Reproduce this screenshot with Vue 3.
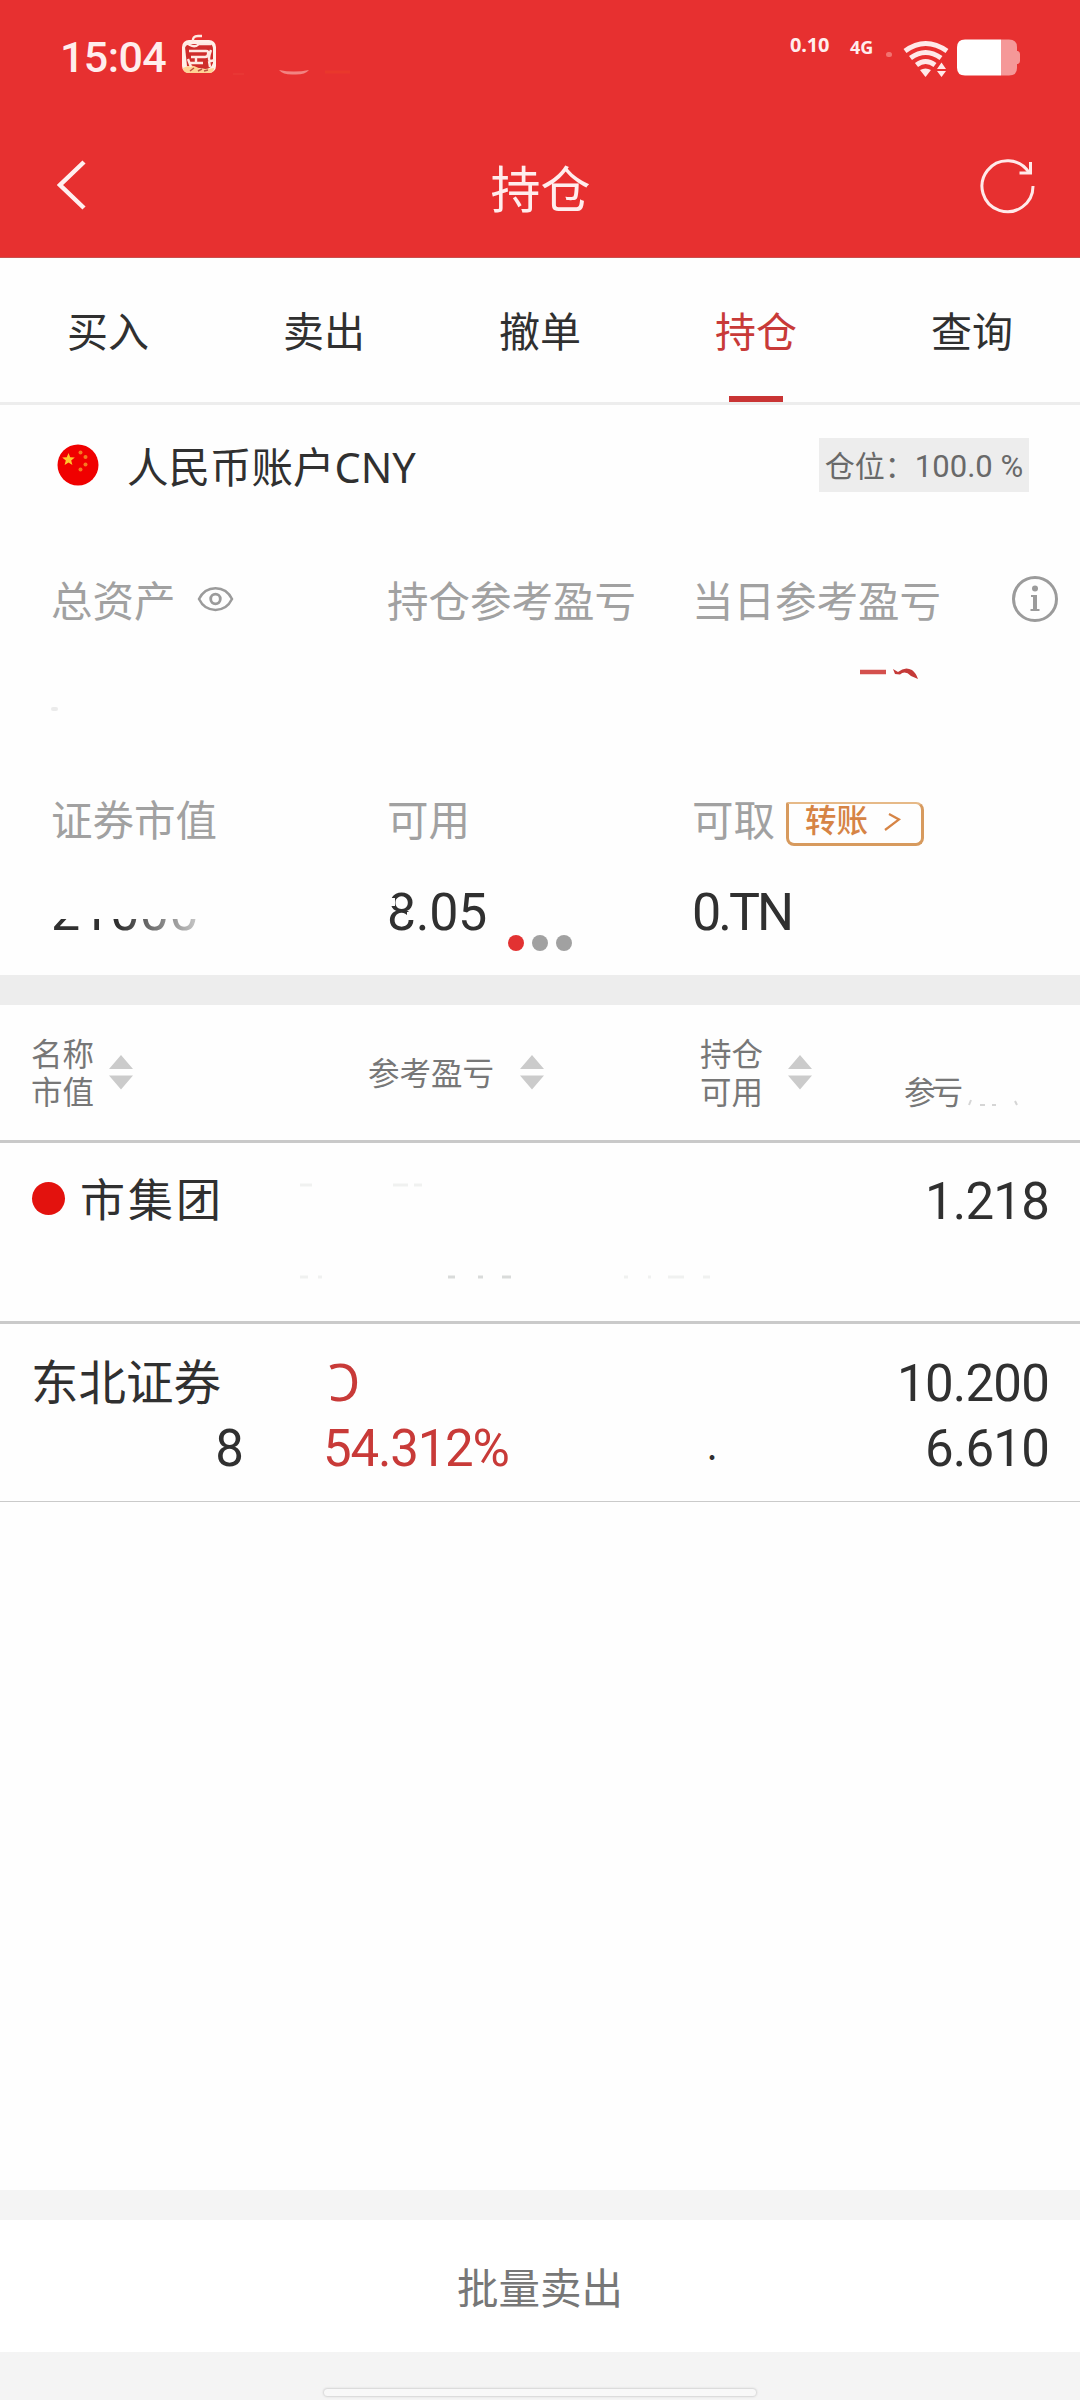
<template>
  <div class="page">
    <header class="header">
      <div class="status">
        <span class="clock">15:04</span>
        <svg class="app-icon" width="38" height="42" viewBox="0 0 38 42">
          <rect x="2" y="7" width="34" height="33" rx="7" fill="#fff0e8" />
          <path d="M5 14Q5 11 9 11L30 11Q33 12 33 16L33 30Q31 36 25 36L7 33Z" fill="#cf2d2b" />
          <path d="M3 35Q12 30 18 35Q25 37 34 35Q34 40 29 40H9Q3 40 3 35Z" fill="#ffd394" />
          <path
            d="M13 9Q12 3 18 3L22 3M4 14Q6 9 10 12Q15 15 19 11L31 11M9 18H26Q29 18 28 21Q28 24 25 24L11 24M10 30L23 30M8 26L11 34M16 24V30M31 17Q27 28 31 28L35 27M29 28L30 34"
            fill="none" stroke="#ffe9e2" stroke-width="2.4"
          />
          <path d="M10 38L14 35M18 38L22 36M24 38L28 37" stroke="#bb5342" stroke-width="1.5" />
        </svg>
        <svg class="trace" width="120" height="10" viewBox="0 0 120 10">
          <path d="M46 3Q61 6 76 3Q72 8 61 7.500Q50 8 46 3Z" fill="#f28482" />
          <path d="M0 7H11" stroke="#e93a36" stroke-width="1.5" />
          <path d="M92 5H117" stroke="#e9382c" stroke-width="3" />
        </svg>
        <div class="signals">
          <span class="rate">0.10</span>
          <span class="net">4G</span>
          <i class="sim"></i>
          <svg class="wifi" width="46" height="38" viewBox="0 0 46 38">
            <g fill="none" stroke="#ffe9e9" stroke-width="5">
              <path d="M2 11Q22.500 -4 44 11" />
              <path d="M7.500 18Q22.500 7 38 18" />
              <path d="M13.500 25Q22.500 18 32 25" />
            </g>
            <path d="M17 30Q22.500 27 28 30L22.500 37Z" fill="#ffe9e9" />
            <path d="M34 29L38.500 22.500L43 29ZM34 31H43L38.500 37Z" fill="#ffe9e9" />
          </svg>
          <svg class="battery" width="64" height="37" viewBox="0 0 64 37">
            <path d="M44 0.500H52Q60 0.500 60 8V12H61Q63 13 63 15V22Q63 24 61 25H60V29Q60 36.500 52 36.500H44Z" fill="#f59898" />
            <path d="M8 0.500H44V36.500H8Q0 36.500 0 28.500V8.500Q0 0.500 8 0.500Z" fill="#fff" />
          </svg>
        </div>
      </div>
      <div class="navbar">
        <svg class="back" width="30" height="50" viewBox="0 0 30 50">
          <path d="M27 2L3 25L27 48" fill="none" stroke="#fff0f0" stroke-width="4.500" />
        </svg>
        <h1>持仓</h1>
        <svg class="refresh" width="56" height="56" viewBox="0 0 56 56">
          <path d="M53 28A25.500 25.500 0 1 1 49 14.500" fill="none" stroke="#ffeaea" stroke-width="3" />
          <path d="M50.500 4V15H39.500" fill="none" stroke="#ffeaea" stroke-width="3" />
        </svg>
      </div>
    </header>

    <nav class="tabs">
      <div
        v-for="tab in tabs"
        :key="tab"
        class="tab"
        :class="{ active: tab === current }"
        @click="current = tab"
      >
        {{ tab }}
      </div>
    </nav>

    <section class="account">
      <div class="account-head">
        <svg class="flag" width="42" height="42" viewBox="0 0 42 42">
          <circle cx="21" cy="21" r="20.500" fill="#f00000" />
          <path d="M11.500 9L13.200 13.300L17.800 13.600L14.200 16.500L15.400 21L11.500 18.500L7.600 21L8.800 16.500L5.200 13.600L9.800 13.300Z" fill="#ffc72e" />
          <g fill="#f57a20">
            <circle cx="23.500" cy="8.500" r="2" />
            <circle cx="28.500" cy="13" r="2" />
            <circle cx="28.500" cy="20.500" r="2" />
            <circle cx="23.500" cy="25.500" r="2" />
          </g>
        </svg>
        <span class="account-name">人民币账户<span class="latin">CNY</span></span>
        <span class="ratio">仓位：<span class="num">100.0 %</span></span>
      </div>

      <div class="summary labels">
        <div class="cell">
          总资产
          <svg class="eye" width="37" height="26" viewBox="0 0 37 26">
            <path d="M2 13C9 -1.500 28 -1.500 35 13C28 27.500 9 27.500 2 13Z" fill="none" stroke="#9b9b9b" stroke-width="2.500" />
            <circle cx="18.500" cy="13" r="4.800" fill="none" stroke="#9b9b9b" stroke-width="2.800" />
          </svg>
        </div>
        <div class="cell">持仓参考盈亏</div>
        <div class="cell">
          当日参考盈亏
          <svg class="info" width="48" height="48" viewBox="0 0 48 48">
            <circle cx="24" cy="24" r="21.500" fill="none" stroke="#9b9b9b" stroke-width="3" />
            <circle cx="24" cy="13.500" r="3" fill="#9b9b9b" />
            <path d="M20 20H26V34H28.500V36H19.500V34H22V22H20Z" fill="#9b9b9b" />
          </svg>
        </div>
      </div>

      <div class="summary hidden-values">
        <div class="cell"><i class="speck"></i></div>
        <div class="cell"></div>
        <div class="cell">
          <svg class="profit-trace" width="62" height="14" viewBox="0 0 62 14">
            <path d="M1 5H27" stroke="#d4504d" stroke-width="4.500" />
            <path d="M34 2L39 5Q46 -1 53 3Q57 6 59 12L52 9Q46 3 41 7.500L36 7Z" fill="#c53a38" />
          </svg>
        </div>
      </div>

      <div class="summary labels">
        <div class="cell">证券市值</div>
        <div class="cell">可用</div>
        <div class="cell">
          可取
          <button class="transfer">
            转账
            <svg width="18" height="20" viewBox="0 0 18 20">
              <path d="M5 3L15 8.500L1 19" fill="none" stroke="#d68445" stroke-width="2.200" />
            </svg>
          </button>
        </div>
      </div>

      <div class="summary values">
        <div class="cell"><div class="market"><span class="num">21000</span></div></div>
        <div class="cell"><div class="usable"><span class="num">8.05</span></div></div>
        <div class="cell"><div class="cash"><span class="num">0.TN</span></div></div>
      </div>

      <div class="pager">
        <i v-for="n in 3" :key="n" :class="{ on: n === 1 }"></i>
      </div>
    </section>

    <section class="holdings">
      <div class="table-head">
        <div v-for="col in columns" :key="col.key" class="col" :class="col.key">
          <div class="lines">
            <p v-for="line in col.lines" :key="line">{{ line }}</p>
          </div>
          <svg v-if="col.sort" class="sorter" width="24" height="35" viewBox="0 0 24 35">
            <path d="M12 0L24 14H0ZM0 20.500H24L12 34.500Z" fill="#cbcbcb" />
          </svg>
          <svg v-else class="tail" width="56" height="8" viewBox="0 0 56 8">
            <path d="M2 6L4 1M13 6H18M25 6H29M48 2L50 6" stroke="#d5d5d5" stroke-width="2" />
          </svg>
        </div>
      </div>

      <div class="row first">
        <div class="stock">
          <span class="name"><i class="mark"></i>市集团</span>
        </div>
        <svg class="faint" width="600" height="110" viewBox="0 0 600 110">
          <g fill="none" stroke="#f0f1f0" stroke-width="3">
            <path d="M2 6H14M95 6H110M116 6H124M2 98H10M20 98H24" />
            <path d="M150 98H157M180 98H185M204 98H213" stroke="#d9dbda" />
            <path d="M326 98H330M350 98H353M370 98H386M405 98H412" />
          </g>
        </svg>
        <div class="price"><p><span class="num">1.218</span></p></div>
      </div>

      <div class="row">
        <div class="stock">
          <span class="name">东北证券</span>
          <span class="amount"><span class="num">8</span></span>
        </div>
        <div class="gain">
          <p class="broken"><span class="open">Ɔ</span></p>
          <p><span class="num">54.312%</span></p>
        </div>
        <div class="count">.</div>
        <div class="price">
          <p><span class="num">10.200</span></p>
          <p><span class="num">6.610</span></p>
        </div>
      </div>
    </section>

    <footer class="footer">
      <button class="sell-all">批量卖出</button>
      <div class="home"><i></i></div>
    </footer>
  </div>
</template>

<script setup>
import { ref } from "vue";

const tabs = ["买入", "卖出", "撤单", "持仓", "查询"];
const current = ref("持仓");

const columns = [
  { key: "c-name", lines: ["名称", "市值"], sort: true },
  { key: "c-gain", lines: ["参考盈亏"], sort: true },
  { key: "c-count", lines: ["持仓", "可用"], sort: true },
  { key: "c-cost", lines: ["参亏"], sort: false }
];
</script>

<style>
body {
  margin: 0;
  background: #fefefe;
}
</style>

<style scoped>
.page {
  width: 1080px;
  height: 2400px;
  display: flex;
  flex-direction: column;
  overflow: hidden;
  background: #fefefe;
  color: #303030;
  font-family: "Noto Sans CJK SC", "Noto Sans", sans-serif;
}

p,
h1 {
  margin: 0;
  font-weight: 400;
}

svg {
  display: block;
  flex: none;
}

button {
  font-family: inherit;
  margin: 0;
}

/* zero line-height keeps the digits on the baseline of the Chinese text */
.num {
  font-family: Roboto, sans-serif;
  line-height: 0;
}

.latin,
.open {
  font-family: "Noto Sans", sans-serif;
  line-height: 0;
}

.header {
  height: 258px;
  flex: none;
  background: #e73030;
  color: #ffeded;
  border-bottom: 1px solid #c9504e;
  box-sizing: border-box;
}

.status {
  height: 115px;
  display: flex;
  align-items: flex-start;
}

.clock {
  width: 120px;
  margin-left: 60px;
  margin-top: 36px;
  font-family: Roboto, sans-serif;
  font-size: 43px;
  line-height: 42px;
  font-weight: 500;
  letter-spacing: -0.6px;
}

.app-icon {
  margin-top: 33px;
}

.trace {
  margin: 67px 0 0 15px;
}

.signals {
  display: flex;
  align-items: flex-start;
  margin-left: auto;
  padding: 38px 59px 0 0;
  font-weight: 700;
}

.rate {
  width: 60px;
  height: 16px;
  font-size: 20px;
  line-height: 14px;
  font-family: "Noto Sans", sans-serif;
  letter-spacing: -0.2px;
}

.net {
  width: 36px;
  height: 16px;
  font-size: 18px;
  line-height: 18px;
  font-family: "Noto Sans", sans-serif;
}

.sim {
  width: 6px;
  height: 5px;
  margin: 14px 11px 0 0;
  border-radius: 4px;
  background: #f27370;
}

.wifi {
  margin-top: 2px;
}

.battery {
  margin-left: 8px;
  margin-top: 1px;
}

.navbar {
  display: flex;
  justify-content: space-between;
  align-items: center;
  height: 142px;
  padding: 0 44px 0 57px;
}

.back {
  margin-right: 27px;
  margin-top: -3px;
}

.navbar h1 {
  font-size: 50px;
  line-height: 60px;
  margin-left: -13px;
}

.tabs {
  display: flex;
  height: 144px;
  flex: none;
  border-bottom: 3px solid #ededed;
}

.tab {
  position: relative;
  flex: 1;
  text-align: center;
  font-size: 41px;
  line-height: 142px;
}

.tab.active {
  color: #c83a38;
}

.tab.active::after {
  content: "";
  position: absolute;
  left: 81px;
  bottom: 0;
  width: 54px;
  height: 6px;
  background: #c93434;
}

.account {
  position: relative;
  height: 570px;
  flex: none;
  border-bottom: 30px solid #ededed;
}

.account-head {
  display: flex;
  align-items: center;
  height: 120px;
  padding: 0 51px 0 57px;
}

.account-name {
  margin-left: 28px;
  font-size: 41.5px;
  line-height: 60px;
}

.ratio {
  width: 210px;
  height: 54px;
  margin-left: auto;
  background: #ededed;
  color: #696969;
  font-size: 30px;
  line-height: 53px;
  text-align: center;
  white-space: pre;
}

.ratio .num {
  font-size: 31px;
}

.summary {
  display: grid;
  grid-template-columns: 336px 305px 1fr;
  padding-left: 51px;
}

.cell {
  display: flex;
  align-items: center;
  height: 60px;
  white-space: nowrap;
}

.labels {
  padding-top: 44px;
  color: #a1a1a1;
  font-size: 41.5px;
  line-height: 60px;
}

.eye {
  margin-left: 21px;
}

.info {
  margin-left: auto;
  margin-right: 21px;
}

.hidden-values {
  padding-top: 38px;
  height: 77px;
}

.hidden-values .cell {
  align-items: flex-start;
}

.speck {
  width: 7px;
  height: 4px;
  margin-top: 40px;
  background: #ebebeb;
  border-radius: 2px;
}

.profit-trace {
  margin-left: 167px;
}

.transfer {
  display: flex;
  align-items: center;
  width: 138px;
  height: 44px;
  margin: 11px 0 0 11px;
  padding: 0 0 10px 16px;
  box-sizing: border-box;
  border: 3px solid #d79a5e;
  border-top: 2px solid #e6b987;
  border-radius: 2px 8px 8px 8px;
  background: none;
  color: #d68445;
  font-size: 31.5px;
  line-height: 32px;
  font-weight: 500;
}

.transfer svg {
  margin: 6px 0 0 16px;
}

.values {
  padding-top: 30px;
  font-size: 52px;
}

.values .cell {
  line-height: 60px;
}

/* only the foot of the figure stays visible, fading to the right */
.market {
  letter-spacing: 0.4px;
  clip-path: inset(41px 0 0 0);
  mask-image: linear-gradient(90deg, #000 45%, rgba(0, 0, 0, 0.25));
}

.usable {
  position: relative;
  letter-spacing: -0.4px;
}

.usable::before,
.usable::after {
  content: "";
  position: absolute;
  background: #fefefe;
}

.usable::before {
  left: 0;
  top: 20px;
  width: 8px;
  height: 8px;
}

.usable::after {
  left: 20px;
  top: 34px;
  width: 8px;
  height: 8px;
}

.cash {
  letter-spacing: -3px;
}

.pager {
  position: absolute;
  left: 508px;
  top: 530px;
  display: flex;
  gap: 8px;
}

.pager i {
  width: 16px;
  height: 16px;
  border-radius: 50%;
  background: #a1a1a1;
}

.pager i.on {
  background: #e23232;
}

.holdings {
  flex: 1;
}

.table-head {
  display: grid;
  grid-template-columns: 337px 332px 204px 1fr;
  align-items: center;
  height: 135px;
  padding-left: 31px;
  border-bottom: 3px solid #c9c9c9;
  color: #777;
  font-size: 31.5px;
  line-height: 38px;
}

.col {
  display: flex;
  align-items: center;
}

.lines {
  margin-top: -4px;
}

.sorter {
  margin-left: 15px;
}

.c-gain .sorter {
  margin-left: 26px;
}

.c-count .sorter {
  margin-left: 25px;
}

.c-cost {
  padding-top: 38px;
  letter-spacing: -4px;
}

.tail {
  margin: 22px 0 0 8px;
}

.row {
  display: grid;
  grid-template-columns: 292px 384px 100px 1fr;
  height: 178px;
  padding: 23px 31px 0 31px;
  border-bottom: 1px solid #cacaca;
  box-sizing: border-box;
  font-size: 51px;
  line-height: 65px;
}

.row.first {
  grid-template-columns: 267px 600px 1fr;
  height: 181px;
  padding-top: 22px;
  border-bottom-width: 3px;
}

.stock {
  display: flex;
  flex-direction: column;
}

.name {
  display: flex;
  align-items: center;
  font-size: 47.5px;
}

.first .name {
  font-size: 45px;
  letter-spacing: 3px;
}

.mark {
  width: 33px;
  height: 33px;
  margin: 2px 15px 0 1px;
  border-radius: 50%;
  background: #e3120e;
}

.amount {
  width: 213px;
  text-align: right;
}

.faint {
  margin-top: 14px;
}

.gain {
  color: #c83a38;
  letter-spacing: -1.2px;
}

.broken {
  padding-left: 5px;
}

.count {
  padding-top: 65px;
  font-size: 36px;
}

.price {
  text-align: right;
  letter-spacing: -0.8px;
}

.footer {
  flex: none;
  height: 210px;
  box-sizing: border-box;
  padding-top: 30px;
  background: #f4f4f4;
}

.sell-all {
  display: block;
  width: 100%;
  height: 132px;
  padding: 0;
  border: 0;
  background: #fff;
  color: #777;
  font-size: 41.5px;
  line-height: 130px;
}

.home {
  display: flex;
  justify-content: center;
  padding-top: 37px;
}

.home i {
  width: 432px;
  height: 7px;
  border-radius: 5px;
  background: #f8f8f8;
  box-shadow: 0 0 2px 1px #d4d4d4;
}
</style>
